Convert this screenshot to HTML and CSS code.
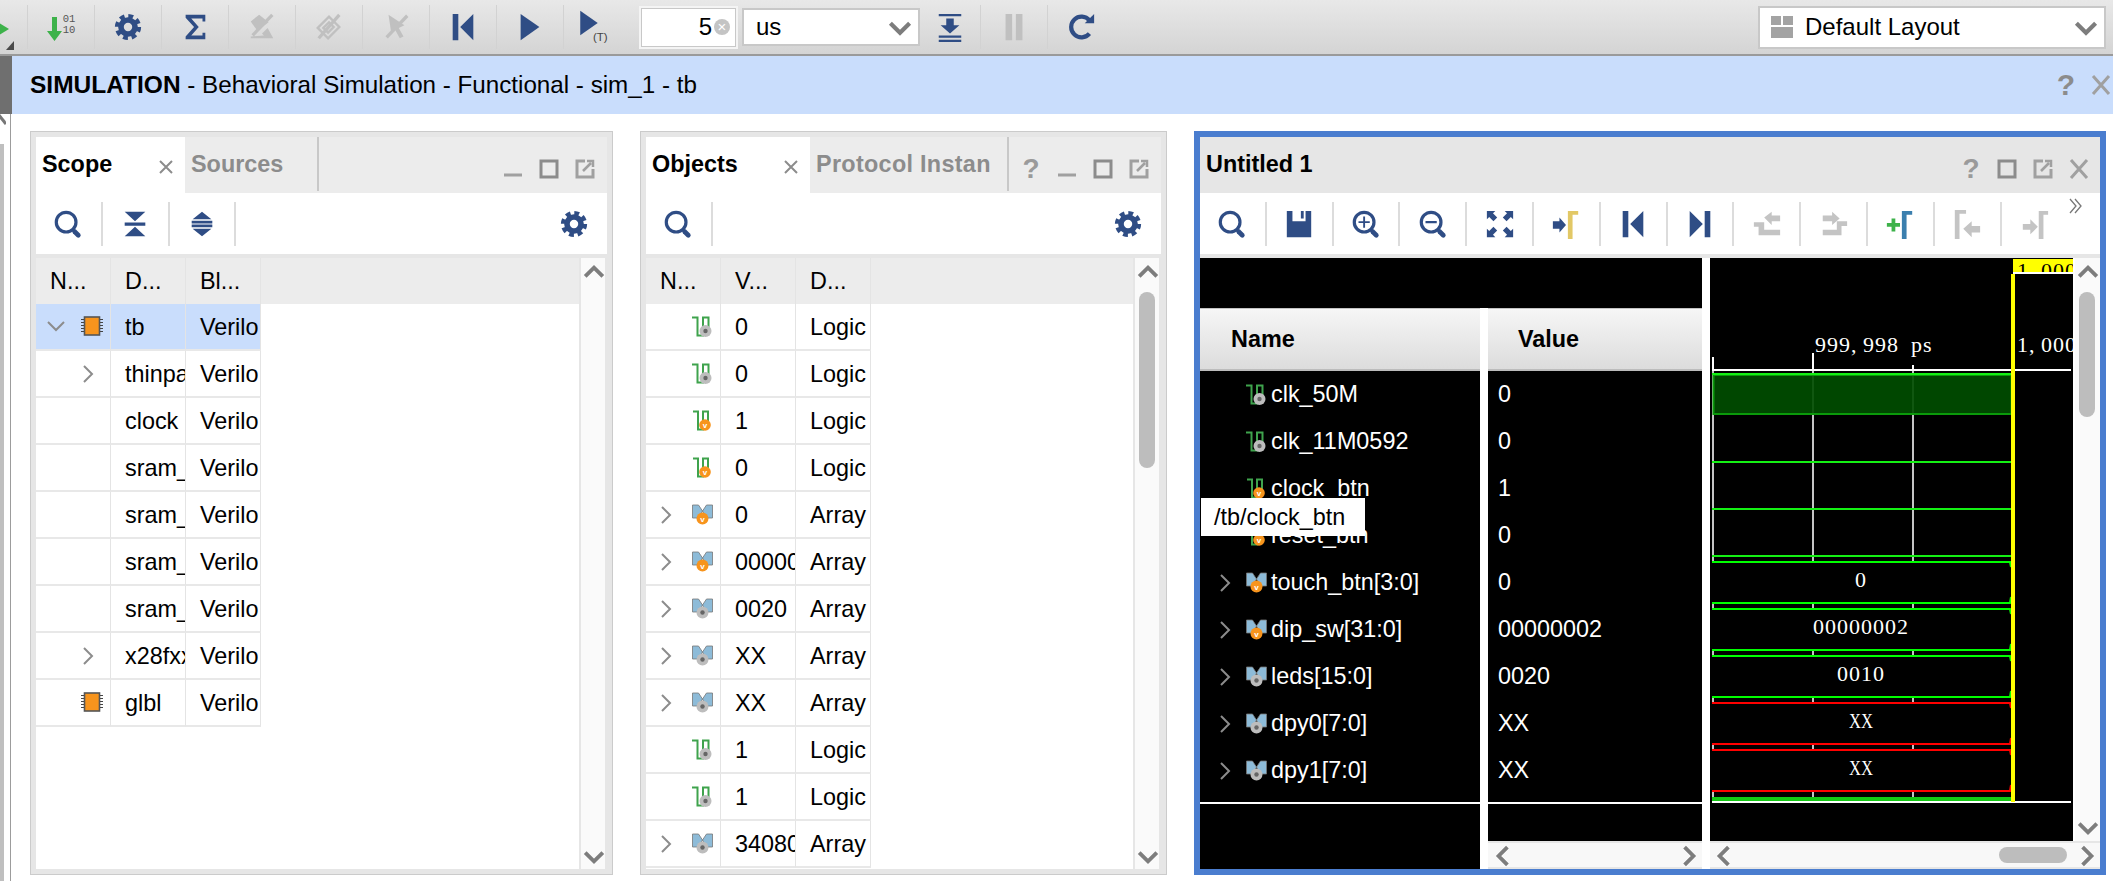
FILE: index.html
```html
<!DOCTYPE html>
<html lang="en">
<head>
  <meta charset="UTF-8" />
  <title>SIMULATION - Behavioral Simulation</title>
  <link rel="stylesheet" href="styles.css">
</head>
<body>

<svg class="defs" width="0" height="0">
  <symbol id="i-search" viewBox="0 0 32 32"><circle cx="14" cy="14" r="10.5" fill="none" stroke="currentColor" stroke-width="3.4"/><path d="M23 24l4 4" stroke="currentColor" stroke-width="5" stroke-linecap="round"/></symbol>
  <symbol id="i-zoomin" viewBox="0 0 32 32"><circle cx="14" cy="14" r="10.5" fill="none" stroke="currentColor" stroke-width="3.4"/><path d="M23 24l4 4" stroke="currentColor" stroke-width="5" stroke-linecap="round"/><path d="M14 8v12M8 14h12" stroke="currentColor" stroke-width="2"/></symbol>
  <symbol id="i-zoomout" viewBox="0 0 32 32"><circle cx="14" cy="14" r="10.5" fill="none" stroke="currentColor" stroke-width="3.4"/><path d="M23 24l4 4" stroke="currentColor" stroke-width="5" stroke-linecap="round"/><path d="M8 14h12" stroke="currentColor" stroke-width="2.4"/></symbol>
  <symbol id="i-gear" viewBox="0 0 32 32"><circle cx="16" cy="16" r="7.5" fill="none" stroke="currentColor" stroke-width="6"/><circle cx="16" cy="16" r="11.5" fill="none" stroke="currentColor" stroke-width="5" stroke-dasharray="5.03 4"/></symbol>
  <symbol id="i-collapse" viewBox="0 0 32 32"><path d="M5 3h22L16 13zM5 29h22L16 19zM5 14.5h22v3.4H5z" fill="currentColor"/></symbol>
  <symbol id="i-expand" viewBox="0 0 32 32"><path d="M6 11L16 3l10 8zM6 21l10 8 10-8zM5 12.500h22v3H5zM5 16.500h22v3H5z" fill="currentColor"/></symbol>
  <symbol id="i-first" viewBox="0 0 32 32"><path d="M5 2h6v28H5zM27 2v28L13 16z" fill="currentColor"/></symbol>
  <symbol id="i-last" viewBox="0 0 32 32"><path d="M27 2h-6v28h6zM5 2v28l14-14z" fill="currentColor"/></symbol>
  <symbol id="i-play" viewBox="0 0 32 32"><path d="M6 2v28l20-14z" fill="currentColor"/></symbol>
  <symbol id="i-sigma" viewBox="0 0 32 32"><path d="M6 3h21v7h-3V7H12l8 9-8 9h12v-3h3v7H6v-3l9-10-9-10z" fill="currentColor"/></symbol>
  <symbol id="i-floppy" viewBox="0 0 32 32"><path d="M3 2h6v11h14V2h6v28H3zM18 2h3v8h-3z" fill="currentColor"/></symbol>
  <symbol id="i-fit" viewBox="0 0 32 32"><path d="M2 2h9L8.500 4.500 13 9l-4 4-4.500-4.500L2 11zM30 2v9l-2.500-2.500L23 13l-4-4 4.500-4.500L21 2zM2 30v-9l2.500 2.500L9 19l4 4-4.500 4.500L11 30zM30 30h-9l2.500-2.500L19 23l4-4 4.500 4.500L30 21z" fill="currentColor"/></symbol>
  <symbol id="i-cursor" viewBox="0 0 32 32"><path d="M2 13h7V9l7 8-7 8v-4H2z" fill="#2f4d85"/><path d="M18 2h11v4h-6v26h-5z" fill="#e2c866"/></symbol>
  <symbol id="i-edge-back" viewBox="0 0 32 32"><path d="M2 14h11v8h17v6H7v-9H2zM13 9l8-6v4h9v6h-9v4z" fill="currentColor"/></symbol>
  <symbol id="i-edge-fwd" viewBox="0 0 32 32"><path d="M4 7h10V3l8 7-8 7v-4H4zM4 22h15v-9h11v5h-6v10H4z" fill="currentColor"/></symbol>
  <symbol id="i-marker" viewBox="0 0 32 32"><path d="M2 15h5v-5h4v5h5v4h-5v5H7v-5H2z" fill="#3db24a"/><path d="M18 2h11v4h-6v26h-5z" fill="#3b7fae"/></symbol>
  <symbol id="i-mark-back" viewBox="0 0 32 32"><path d="M3 1h12v4H8v27H3zM12 21l9-8v5h9v7h-9v5z" fill="currentColor"/></symbol>
  <symbol id="i-mark-fwd" viewBox="0 0 32 32"><path d="M3 16h8v-5l8 8-8 8v-5H3zM20 2h10v4h-5v26h-5z" fill="currentColor"/></symbol>
  <symbol id="i-clear-a" viewBox="0 0 32 32"><path d="M4 10l9-7 10 8-12 9zM4 28h24l-6-11-6 6 2 2-14 1z" fill="currentColor"/><path d="M27 3L6 25" stroke="currentColor" stroke-width="3.500"/></symbol>
  <symbol id="i-clear-b" viewBox="0 0 32 32"><path d="M4 17L16 5l11 11-12 12zM10 17l6-6 5 5-6 6z" fill="none" stroke="currentColor" stroke-width="2.500"/><path d="M27 3L5 28" stroke="currentColor" stroke-width="3.500"/></symbol>
  <symbol id="i-clear-c" viewBox="0 0 32 32"><path d="M8 3l17 11-6 3 5 9-4 2-5-9-4 4z" fill="currentColor"/><path d="M28 4L6 27" stroke="currentColor" stroke-width="3.500"/></symbol>
  <symbol id="i-bottom" viewBox="0 0 32 32"><path d="M4 2h24v2.500H4zM12 7h8v7h6L16 23 6 14h6zM4 25h24v2.500H4zM4 29.500h24V32H4z" fill="currentColor"/></symbol>
  <symbol id="i-pause" viewBox="0 0 32 32"><path d="M7 2h7v28H7zM18 2h7v28h-7z" fill="currentColor"/></symbol>
  <symbol id="i-refresh" viewBox="0 0 32 32"><path d="M25 23a11 11 0 1 1 0-14" fill="none" stroke="currentColor" stroke-width="4.500"/><path d="M20 12h10V2z" fill="currentColor"/></symbol>
  <symbol id="i-chip" viewBox="0 0 22 20"><path d="M0 3.500h4M0 6.500h4M0 9.500h4M0 12.500h4M0 15.500h4M18 3.500h4M18 6.500h4M18 9.500h4M18 12.500h4M18 15.500h4" stroke="#444" stroke-width="1.200"/><rect x="3.500" y="1" width="15" height="18" fill="#f7941d" stroke="#555" stroke-width="1.600"/></symbol>
  <symbol id="i-sig" viewBox="0 0 21 21"><path d="M0 1.500h5.500v18H11v-18h5.500v17" fill="none" stroke="#3fa34d" stroke-width="2"/><circle cx="13.500" cy="15" r="6" fill="#bdbdbd"/><circle cx="13.500" cy="15" r="2.200" fill="#666"/></symbol>
  <symbol id="i-sigv" viewBox="0 0 21 21"><path d="M1 1.500h5v18h5v-18h5v17" fill="none" stroke="#3fa34d" stroke-width="2"/><circle cx="13" cy="15" r="5.800" fill="#f7941d"/><text x="13" y="18" class="badge-v">v</text></symbol>
  <symbol id="i-bus" viewBox="0 0 21 21"><path d="M.5 1h6l4 6 4-6h6v13h-6l-4-7-4 7h-6z" fill="#8dbbd8" stroke="#777" stroke-width=".8"/><circle cx="10.500" cy="14.500" r="6" fill="#bdbdbd"/><circle cx="10.500" cy="14.500" r="2.200" fill="#666"/></symbol>
  <symbol id="i-busv" viewBox="0 0 21 21"><path d="M.5 1h6l4 6 4-6h6v13h-6l-4-7-4 7h-6z" fill="#8dbbd8" stroke="#777" stroke-width=".8"/><circle cx="10.500" cy="14.500" r="6" fill="#f7941d"/><text x="10.500" y="18" class="badge-v">v</text></symbol>
  <symbol id="i-right" viewBox="0 0 12 20"><path d="M2 2l8 8-8 8" fill="none" stroke="#8c8c8c" stroke-width="2"/></symbol>
  <symbol id="i-down" viewBox="0 0 20 12"><path d="M2 2l8 8 8-8" fill="none" stroke="#8c8c8c" stroke-width="2"/></symbol>
  <symbol id="i-scroll" viewBox="0 0 20 20"><path d="M2 14l8-8 8 8" fill="none" stroke="#7d7d7d" stroke-width="3.500"/></symbol>
  <symbol id="i-close" viewBox="0 0 14 14"><path d="M1 1l12 12M13 1L1 13" stroke="#8c8c8c" stroke-width="2"/></symbol>
  <symbol id="i-close-big" viewBox="0 0 20 20"><path d="M2 1l16 18M18 1L2 19" stroke="#a0a0a0" stroke-width="3"/></symbol>
  <symbol id="i-min" viewBox="0 0 20 20"><path d="M1 16h18" stroke="#a0a0a0" stroke-width="3"/></symbol>
  <symbol id="i-box" viewBox="0 0 20 20"><rect x="2" y="2" width="16" height="16" fill="none" stroke="#8c8c8c" stroke-width="3"/></symbol>
  <symbol id="i-pop" viewBox="0 0 20 20"><path d="M10 2H2v16h16v-8" fill="none" stroke="#a0a0a0" stroke-width="3"/><path d="M8 12l8-8M12 2h6v6" fill="none" stroke="#a0a0a0" stroke-width="2.500"/></symbol>
  <symbol id="i-tile" viewBox="0 0 22 22"><path d="M0 0h10v9H0zM12 0h10v9H12zM0 11h22v11H0z" fill="#a3a3a3"/></symbol>
</svg>

<div class="toolbar">
  <div class="tb-stub">
    <svg width="27" height="54"><path d="M-6 20l15 9-15 9z" fill="#3db24a"/><path d="M14 41v9H6z" fill="#4a4a4a"/></svg>
  </div>
  <div class="tb-btn"><svg class="ic-dl" width="16" height="26"><path d="M5 1h5v14h5l-7.500 10L0 15h5z" fill="#3db24a"/></svg><span class="bits">01<br>10</span></div>
  <div class="tb-btn navy"><svg class="ic-30"><use href="#i-gear"/></svg></div>
  <div class="tb-btn navy"><svg class="ic-30"><use href="#i-sigma"/></svg></div>
  <div class="tb-btn off"><svg class="ic-30"><use href="#i-clear-a"/></svg></div>
  <div class="tb-btn off"><svg class="ic-30"><use href="#i-clear-b"/></svg></div>
  <div class="tb-btn off"><svg class="ic-30"><use href="#i-clear-c"/></svg></div>
  <div class="tb-btn navy"><svg class="ic-30"><use href="#i-first"/></svg></div>
  <div class="tb-btn navy"><svg class="ic-30"><use href="#i-play"/></svg></div>
  <div class="tb-btn navy"><svg class="ic-play-t"><use href="#i-play"/></svg><span class="t-mark">(T)</span></div>

  <div class="time-box"><span>5</span><i class="clear-dot">×</i></div>
  <div class="combo unit"><span>us</span><svg class="combo-arrow"><use href="#i-scroll" transform="rotate(180 12 12)"/></svg></div>
  <div class="tb-btn navy first-after"><svg class="ic-30"><use href="#i-bottom"/></svg></div>
  <div class="tb-btn off"><svg class="ic-30"><use href="#i-pause"/></svg></div>
  <div class="tb-btn navy"><svg class="ic-30"><use href="#i-refresh"/></svg></div>

  <div class="combo layout"><svg class="tile"><use href="#i-tile"/></svg><span>Default Layout</span><svg class="combo-arrow"><use href="#i-scroll" transform="rotate(180 12 12)"/></svg></div>
</div>

<div class="banner">
  <div><b>SIMULATION</b> - Behavioral Simulation - Functional - sim_1 - tb</div>
  <div class="banner-btns"><span>?</span><svg width="20" height="24"><use href="#i-close-big"/></svg></div>
</div>

<div class="main">
  <div class="edge">
    <svg width="6" height="30"><path d="M-2 0l8 10" stroke="#777" stroke-width="3"/></svg>
    <div class="edge-bar"></div>
  </div>

  <!-- scope -->
  <div class="panel scope">
    <div class="title-strip">
      <div class="tab active scope-tab"><span>Scope</span><svg width="14" height="14"><use href="#i-close"/></svg></div>
      <div class="tab sources-tab">Sources</div>
      <div class="win-btns">
        <div class="win-btn"><svg><use href="#i-min"/></svg></div>
        <div class="win-btn"><svg><use href="#i-box"/></svg></div>
        <div class="win-btn"><svg><use href="#i-pop"/></svg></div>
      </div>
    </div>
    <div class="tools">
      <div class="tool"><svg class="ic-28"><use href="#i-search"/></svg></div>
      <div class="tool"><svg class="ic-28"><use href="#i-collapse"/></svg></div>
      <div class="tool"><svg class="ic-28"><use href="#i-expand"/></svg></div>
      <div class="tool last"><svg class="ic-28"><use href="#i-gear"/></svg></div>
    </div>
    <div class="list">
      <div class="table">
        <div class="row head"><div class="cell">N...</div><div class="cell">D...</div><div class="cell">Bl...</div></div>
        <div class="row sel"><div class="cell tree"><svg class="tw-down"><use href="#i-down"/></svg><svg class="chip"><use href="#i-chip"/></svg></div><div class="cell">tb</div><div class="cell">Verilo</div></div>
        <div class="row"><div class="cell tree"><svg class="tw-right"><use href="#i-right"/></svg></div><div class="cell">thinpa</div><div class="cell">Verilo</div></div>
        <div class="row"><div class="cell tree"></div><div class="cell">clock</div><div class="cell">Verilo</div></div>
        <div class="row"><div class="cell tree"></div><div class="cell">sram_</div><div class="cell">Verilo</div></div>
        <div class="row"><div class="cell tree"></div><div class="cell">sram_</div><div class="cell">Verilo</div></div>
        <div class="row"><div class="cell tree"></div><div class="cell">sram_</div><div class="cell">Verilo</div></div>
        <div class="row"><div class="cell tree"></div><div class="cell">sram_</div><div class="cell">Verilo</div></div>
        <div class="row"><div class="cell tree"><svg class="tw-right"><use href="#i-right"/></svg></div><div class="cell">x28fxx</div><div class="cell">Verilo</div></div>
        <div class="row"><div class="cell tree"><svg class="chip"><use href="#i-chip"/></svg></div><div class="cell">glbl</div><div class="cell">Verilo</div></div>
      </div>
      <div class="vscroll"><svg class="sc-up"><use href="#i-scroll"/></svg><svg class="sc-down"><use href="#i-scroll" transform="rotate(180 11 11)"/></svg></div>
    </div>
  </div>

  <!-- objects -->
  <div class="panel objects">
    <div class="title-strip">
      <div class="tab active objects-tab"><span>Objects</span><svg width="14" height="14"><use href="#i-close"/></svg></div>
      <div class="tab protocol-tab">Protocol Instan</div>
      <div class="win-btns">
        <div class="win-btn help">?</div>
        <div class="win-btn"><svg><use href="#i-min"/></svg></div>
        <div class="win-btn"><svg><use href="#i-box"/></svg></div>
        <div class="win-btn"><svg><use href="#i-pop"/></svg></div>
      </div>
    </div>
    <div class="tools">
      <div class="tool"><svg class="ic-28"><use href="#i-search"/></svg></div>
      <div class="tool last"><svg class="ic-28"><use href="#i-gear"/></svg></div>
    </div>
    <div class="list">
      <div class="table">
        <div class="row head"><div class="cell">N...</div><div class="cell">V...</div><div class="cell">D...</div></div>
        <div class="row"><div class="cell tree"><svg class="sig"><use href="#i-sig"/></svg></div><div class="cell">0</div><div class="cell">Logic</div></div>
        <div class="row"><div class="cell tree"><svg class="sig"><use href="#i-sig"/></svg></div><div class="cell">0</div><div class="cell">Logic</div></div>
        <div class="row"><div class="cell tree"><svg class="sig"><use href="#i-sigv"/></svg></div><div class="cell">1</div><div class="cell">Logic</div></div>
        <div class="row"><div class="cell tree"><svg class="sig"><use href="#i-sigv"/></svg></div><div class="cell">0</div><div class="cell">Logic</div></div>
        <div class="row"><div class="cell tree"><svg class="tw-right"><use href="#i-right"/></svg><svg class="sig"><use href="#i-busv"/></svg></div><div class="cell">0</div><div class="cell">Array</div></div>
        <div class="row"><div class="cell tree"><svg class="tw-right"><use href="#i-right"/></svg><svg class="sig"><use href="#i-busv"/></svg></div><div class="cell">00000</div><div class="cell">Array</div></div>
        <div class="row"><div class="cell tree"><svg class="tw-right"><use href="#i-right"/></svg><svg class="sig"><use href="#i-bus"/></svg></div><div class="cell">0020</div><div class="cell">Array</div></div>
        <div class="row"><div class="cell tree"><svg class="tw-right"><use href="#i-right"/></svg><svg class="sig"><use href="#i-bus"/></svg></div><div class="cell">XX</div><div class="cell">Array</div></div>
        <div class="row"><div class="cell tree"><svg class="tw-right"><use href="#i-right"/></svg><svg class="sig"><use href="#i-bus"/></svg></div><div class="cell">XX</div><div class="cell">Array</div></div>
        <div class="row"><div class="cell tree"><svg class="sig"><use href="#i-sig"/></svg></div><div class="cell">1</div><div class="cell">Logic</div></div>
        <div class="row"><div class="cell tree"><svg class="sig"><use href="#i-sig"/></svg></div><div class="cell">1</div><div class="cell">Logic</div></div>
        <div class="row"><div class="cell tree"><svg class="tw-right"><use href="#i-right"/></svg><svg class="sig"><use href="#i-bus"/></svg></div><div class="cell">34080</div><div class="cell">Array</div></div>
      </div>
      <div class="vscroll"><svg class="sc-up"><use href="#i-scroll"/></svg><div class="thumb obj-thumb"></div><svg class="sc-down"><use href="#i-scroll" transform="rotate(180 11 11)"/></svg></div>
    </div>
  </div>

  <!-- waveform -->
  <div class="panel wave">
    <div class="title-strip">
      <div class="wave-title">Untitled 1</div>
      <div class="win-btns">
        <div class="win-btn help">?</div>
        <div class="win-btn"><svg><use href="#i-box"/></svg></div>
        <div class="win-btn"><svg><use href="#i-pop"/></svg></div>
        <div class="win-btn"><svg><use href="#i-close-big"/></svg></div>
      </div>
    </div>
    <div class="tools">
      <div class="tool"><svg class="ic-28"><use href="#i-search"/></svg></div>
      <div class="tool"><svg class="ic-28"><use href="#i-floppy"/></svg></div>
      <div class="tool"><svg class="ic-28"><use href="#i-zoomin"/></svg></div>
      <div class="tool"><svg class="ic-28"><use href="#i-zoomout"/></svg></div>
      <div class="tool"><svg class="ic-28"><use href="#i-fit"/></svg></div>
      <div class="tool"><svg class="ic-28"><use href="#i-cursor"/></svg></div>
      <div class="tool"><svg class="ic-28"><use href="#i-first"/></svg></div>
      <div class="tool"><svg class="ic-28"><use href="#i-last"/></svg></div>
      <div class="tool off"><svg class="ic-28"><use href="#i-edge-back"/></svg></div>
      <div class="tool off"><svg class="ic-28"><use href="#i-edge-fwd"/></svg></div>
      <div class="tool"><svg class="ic-28"><use href="#i-marker"/></svg></div>
      <div class="tool off"><svg class="ic-28"><use href="#i-mark-back"/></svg></div>
      <div class="tool off plain"><svg class="ic-28"><use href="#i-mark-fwd"/></svg></div>
      <svg class="more" width="14" height="16"><path d="M1 1l6 7-6 7M6 1l6 7-6 7" fill="none" stroke="#777" stroke-width="1.300"/></svg>
    </div>
    <div class="wave-body">
      <div class="names">
        <div class="wave-top"></div>
        <div class="wave-head name-head">Name</div>
        <div class="sigs">
          <div class="sig-row"><div class="twist"></div><svg class="sig"><use href="#i-sig"/></svg><span>clk_50M</span></div>
          <div class="sig-row"><div class="twist"></div><svg class="sig"><use href="#i-sig"/></svg><span>clk_11M0592</span></div>
          <div class="sig-row"><div class="twist"></div><svg class="sig"><use href="#i-sigv"/></svg><span>clock_btn</span></div>
          <div class="sig-row"><div class="twist"></div><svg class="sig"><use href="#i-sigv"/></svg><span>reset_btn</span></div>
          <div class="sig-row"><div class="twist"><svg class="tw-right"><use href="#i-right"/></svg></div><svg class="sig"><use href="#i-busv"/></svg><span>touch_btn[3:0]</span></div>
          <div class="sig-row"><div class="twist"><svg class="tw-right"><use href="#i-right"/></svg></div><svg class="sig"><use href="#i-busv"/></svg><span>dip_sw[31:0]</span></div>
          <div class="sig-row"><div class="twist"><svg class="tw-right"><use href="#i-right"/></svg></div><svg class="sig"><use href="#i-bus"/></svg><span>leds[15:0]</span></div>
          <div class="sig-row"><div class="twist"><svg class="tw-right"><use href="#i-right"/></svg></div><svg class="sig"><use href="#i-bus"/></svg><span>dpy0[7:0]</span></div>
          <div class="sig-row"><div class="twist"><svg class="tw-right"><use href="#i-right"/></svg></div><svg class="sig"><use href="#i-bus"/></svg><span>dpy1[7:0]</span></div>
        </div>
        <div class="end-line"></div>
        <div class="tooltip">/tb/clock_btn</div>
      </div>
      <div class="values">
        <div class="wave-top"></div>
        <div class="wave-head value-head">Value</div>
        <div class="sigs">
          <div class="val-row">0</div>
          <div class="val-row">0</div>
          <div class="val-row">1</div>
          <div class="val-row">0</div>
          <div class="val-row">0</div>
          <div class="val-row">00000002</div>
          <div class="val-row">0020</div>
          <div class="val-row">XX</div>
          <div class="val-row">XX</div>
        </div>
        <div class="end-line"></div>
        <div class="spacer"></div>
        <div class="hscroll"><svg class="hs-left"><use href="#i-scroll" transform="rotate(-90 11 11)"/></svg><svg class="hs-right"><use href="#i-scroll" transform="rotate(90 11 11)"/></svg></div>
      </div>
      <div class="plot">
        <svg class="plot-svg" width="363" height="583" viewBox="0 0 363 583">
          <defs><clipPath id="label-clip"><rect x="303" y="1" width="60" height="13"/></clipPath></defs>
          <path d="M3 112V304M103 112V304M203 112V304" stroke="#c4c4c4" stroke-width="2"/>
          <path d="M3 99v13M103 95v17M203 107v5" stroke="#fff" stroke-width="2"/>
          <path d="M3 345v6M103 345v6M203 345v6M3 392v6M103 392v6M203 392v6M3 439v6M103 439v6M203 439v6M3 486v6M103 486v6M203 486v6M3 533v7M103 533v7M203 533v7" stroke="#c4c4c4" stroke-width="2"/>
          <text class="ruler" x="105 117 129 141 153 165 177 189 201 213" y="94">999,998 ps</text>
          <text class="ruler" x="307 319 331 343 355" y="94">1,000</text>
          <path d="M2 112H361" stroke="#fff" stroke-width="2"/>
          <rect x="3.500" y="117" width="298" height="39" fill="#004d00" fill-opacity=".92" stroke="#0a9a0a" stroke-width="2"/>
          <path d="M2 116H301M2 204H301M2 251H301M2 298H301" stroke="#14f014" stroke-width="2"/>
          <path d="M2 304H300L301 309M2 345H300L301 339M2 351H300L301 356M2 392H300L301 386M2 398H300L301 403M2 439H300L301 433" fill="none" stroke="#00ff00" stroke-width="2"/>
          <path d="M2 445H300L301 450M2 486H300L301 480M2 492H300L301 497M2 533H300L301 527" fill="none" stroke="#ff0000" stroke-width="2"/>
          <path d="M2 541H302" stroke="#14c814" stroke-width="4"/>
          <path d="M2 544H361" stroke="#fff" stroke-width="2"/>
          <text class="ruler mid" x="151" y="329">0</text>
          <text class="ruler mid" x="151" y="376">00000002</text>
          <text class="ruler mid" x="151" y="423">0010</text>
          <text class="ruler" x="139" y="470" textLength="24" lengthAdjust="spacingAndGlyphs">XX</text>
          <text class="ruler" x="139" y="517" textLength="24" lengthAdjust="spacingAndGlyphs">XX</text>
          <path d="M303 16V544" stroke="#ffff00" stroke-width="4"/>
          <rect x="303" y="1" width="60" height="13" fill="#ffff00"/>
          <text class="ruler dark" x="307 319 331 343 355" y="20" clip-path="url(#label-clip)">1,000</text>
          <path d="M303 15H363" stroke="#fff" stroke-width="2"/>
        </svg>
        <div class="hscroll plot-scroll"><svg class="hs-left"><use href="#i-scroll" transform="rotate(-90 11 11)"/></svg><div class="thumb h-thumb"></div></div>
      </div>
      <div class="vscroll wave-scroll">
        <svg class="sc-up"><use href="#i-scroll"/></svg>
        <div class="thumb wave-thumb"></div>
        <svg class="sc-down"><use href="#i-scroll" transform="rotate(180 11 11)"/></svg>
        <div class="corner"><svg class="hs-right"><use href="#i-scroll" transform="rotate(90 11 11)"/></svg></div>
      </div>
    </div>
  </div>
</div>

</body>
</html>
```
FILE: styles.css
```css
* {
  box-sizing: border-box;
}
html, body {
  margin: 0;
  height: 881px;
  overflow: hidden;
}
body {
  display: flex;
  flex-direction: column;
  background: #fff;
  font-family: "Liberation Sans", Arial, sans-serif;
  font-size: 23.4px;
  color: #000;
}
.defs {
  position: absolute;
}
.badge-v {
  font-size: 8px;
  font-weight: bold;
  fill: #fff;
  text-anchor: middle;
}

/* top toolbar */
.toolbar {
  flex: 0 0 56px;
  display: flex;
  align-items: center;
  background: linear-gradient(#e8e8e8, #d4d4d4);
  border-bottom: 2px solid #9a9a9a;
}
.tb-stub {
  width: 27px;
  height: 54px;
  overflow: hidden;
}
.tb-stub svg {
  display: block;
}
.tb-btn {
  position: relative;
  width: 67px;
  height: 44px;
  display: flex;
  align-items: center;
  justify-content: center;
  border-left: 1px solid #d2d2d2;
}
.navy {
  color: #2f4d85;
}
.off {
  color: #c0c0c0;
}
.ic-30 {
  width: 30px;
  height: 30px;
}
.ic-dl {
  margin-top: 3px;
}
.bits {
  font-family: "Liberation Mono", monospace;
  font-size: 10.500px;
  line-height: 11px;
  color: #555;
  margin: -5px 0 0 0;
}
.ic-play-t {
  width: 28px;
  height: 28px;
  margin: -8px 0 0 -16px;
}
.t-mark {
  position: absolute;
  left: 29px;
  top: 26px;
  font-size: 11.500px;
  color: #444;
}
.time-box {
  width: 99px;
  height: 43px;
  margin-left: 9px;
  padding-right: 6px;
  display: flex;
  align-items: center;
  justify-content: flex-end;
  background: #fff;
  border: 2px solid #f4f4f4;
  box-shadow: inset 0 0 0 1px #c8c8c8;
  font-size: 24px;
}
.clear-dot {
  width: 16px;
  height: 16px;
  margin-left: 2px;
  border-radius: 50%;
  background: #c4c4c4;
  color: #fff;
  font-size: 15px;
  font-style: normal;
  line-height: 16px;
  text-align: center;
}
.combo {
  height: 38px;
  display: flex;
  align-items: center;
  background: #fff;
  border: 2px solid #c8c8c8;
  font-size: 24px;
}
.unit {
  width: 178px;
  margin-left: 4px;
  padding-left: 12px;
}
.unit span {
  flex: 1;
}
.combo-arrow {
  width: 24px;
  height: 24px;
  margin: 2px 6px 0 0;
}
.first-after {
  width: 60px;
  border-left: 0;
}
.layout {
  width: 348px;
  height: 43px;
  margin: 0 7px 0 auto;
  padding-left: 11px;
}
.layout span {
  flex: 1;
}
.tile {
  width: 22px;
  height: 22px;
  margin-right: 12px;
}

/* blue state bar */
.banner {
  flex: 0 0 58px;
  display: flex;
  align-items: center;
  justify-content: space-between;
  padding-left: 18px;
  background: #c9ddfc;
  border-left: 12px solid #6f6f6f;
  font-size: 24.200px;
}
.banner b {
  font-size: 24.500px;
}
.banner-btns {
  display: flex;
  align-items: center;
  gap: 16px;
  padding-right: 2px;
  color: #8c8c8c;
  font-weight: bold;
  font-size: 30px;
}

/* panels */
.main {
  flex: 1;
  min-height: 0;
  display: flex;
  padding-bottom: 6px;
}
.edge {
  width: 11px;
  display: flex;
  flex-direction: column;
  margin: 0 19px -6px 0;
  border-right: 1px solid #9c9c9c;
}
.edge-bar {
  flex: 1;
  width: 4px;
  background: #bfbfbf;
}
.panel {
  margin-top: 17px;
  padding: 5px;
  display: flex;
  flex-direction: column;
  background: #e6e6e6;
  border: 1px solid #cbcbcb;
}
.scope {
  width: 583px;
}
.objects {
  width: 527px;
  margin-left: 27px;
}
.wave {
  width: 912px;
  margin-left: 27px;
  padding: 0;
  border: 6px solid #4a7dcf;
}
.title-strip {
  flex: 0 0 56px;
  display: flex;
  background: #ececec;
}
.wave .title-strip {
  background: #e6e6e6;
}
.tab {
  display: flex;
  justify-content: space-between;
  padding: 13px 12px 0 6px;
  font-weight: bold;
  line-height: 28px;
  color: #8c8c8c;
  white-space: nowrap;
}
.tab svg {
  margin-top: 10px;
}
.tab.active {
  background: #fff;
  color: #000;
}
.scope-tab {
  width: 149px;
}
.sources-tab {
  width: 134px;
  height: 54px;
  border-right: 2px solid #c8c8c8;
}
.objects-tab {
  width: 164px;
}
.protocol-tab {
  width: 199px;
  height: 54px;
  overflow: hidden;
  letter-spacing: .3px;
  border-right: 2px solid #c8c8c8;
}
.win-btns {
  margin-left: auto;
  display: flex;
  padding: 21px 4px 0 0;
}
.wave .win-btns {
  padding-right: 3px;
}
.win-btn {
  width: 36px;
  height: 22px;
  text-align: center;
}
.win-btn svg {
  width: 20px;
  height: 20px;
}
.win-btn.help {
  font-size: 28px;
  font-weight: bold;
  line-height: 22px;
  color: #9a9a9a;
}
.wave-title {
  padding: 13px 0 0 6px;
  font-weight: bold;
  line-height: 28px;
}

.tools {
  flex: 0 0 61px;
  display: flex;
  align-items: center;
  background: #fff;
  color: #2f4d85;
  position: relative;
}
.tool {
  width: 66.800px;
  height: 44px;
  display: flex;
  align-items: center;
  justify-content: center;
  border-right: 2px solid #dcdcdc;
}
.tool.off {
  color: #c4c4c4;
}
.tool.plain, .tool.last {
  border-right: 0;
}
.tool.last {
  margin-left: auto;
}
.ic-28 {
  width: 30px;
  height: 30px;
}
.more {
  position: absolute;
  right: 17px;
  top: 5px;
}

/* tables */
.list {
  flex: 1;
  min-height: 0;
  margin-top: 4px;
  display: flex;
}
.table {
  flex: 1;
  overflow: hidden;
  background: #fff;
}
.row {
  display: flex;
  width: max-content;
  height: 47px;
  line-height: 46px;
}
.row .cell {
  width: 75px;
  padding-left: 14px;
  overflow: hidden;
  white-space: nowrap;
  border-right: 1px solid #e4e4e4;
  border-bottom: 2px solid #e8e8e8;
  position: relative;
}
.row.head {
  width: 100%;
  height: 46px;
  background: #ececec;
}
.row.head .cell {
  padding-left: 14px;
  border-bottom: 0;
}
.row.sel {
  background: #c9ddfc;
}
.row .cell.tree {
  padding: 0;
}
.tree svg {
  position: absolute;
  top: 50%;
}
.tw-down {
  left: 10px;
  width: 20px;
  height: 12px;
  margin-top: -7px;
}
.tw-right {
  width: 12px;
  height: 20px;
  margin-top: -10px;
}
.tree .tw-right {
  left: 46px;
}
.chip {
  left: 45px;
  width: 22px;
  height: 20px;
  margin-top: -11px;
}
.sig {
  flex: none;
  width: 21px;
  height: 21px;
}
.tree .sig {
  left: 46px;
  margin-top: -11px;
}
.objects .tree .tw-right {
  left: 14px;
}

.vscroll {
  position: relative;
  flex: 0 0 26px;
  margin-right: 2px;
  background: #fafafa;
  border-left: 2px solid #e6e6e6;
}
.sc-up, .sc-down {
  position: absolute;
  left: 2px;
  width: 22px;
  height: 22px;
}
.sc-up {
  top: 3px;
}
.sc-down {
  bottom: 1px;
}
.thumb {
  position: absolute;
  background: #bdbdbd;
  border-radius: 8px;
}
.obj-thumb {
  left: 4px;
  top: 34px;
  width: 16px;
  height: 176px;
}

/* wave window */
.wave-body {
  flex: 1;
  min-height: 0;
  margin-top: 4px;
  display: flex;
  background: #fff;
}
.names, .values, .plot {
  display: flex;
  flex-direction: column;
  position: relative;
  color: #fff;
  background: #000;
}
.names {
  width: 280px;
}
.values {
  width: 214px;
  margin-left: 8px;
}
.plot {
  width: 363px;
  margin-left: 8px;
}
.wave-top {
  flex: 0 0 50px;
}
.values .wave-top {
  margin-left: -8px;
  background: #000;
}
.wave-head {
  flex: 0 0 62px;
  background: linear-gradient(#f6f6f6, #dcdcdc);
  border-top: 1px solid #c4c4c4;
  border-bottom: 2px solid #bcbcbc;
  color: #000;
  font-weight: bold;
  line-height: 60px;
}
.name-head {
  padding-left: 31px;
}
.value-head {
  padding-left: 30px;
}
.sig-row {
  height: 47px;
  display: flex;
  align-items: center;
}
.twist {
  flex: 0 0 46px;
  padding-left: 19px;
  height: 20px;
}
.twist svg {
  display: block;
  margin: 0;
}
.sig-row span {
  margin-left: 4px;
}
.val-row {
  height: 47px;
  padding-left: 10px;
  line-height: 47px;
}
.end-line {
  height: 2px;
  margin-top: 8px;
  background: #fff;
}
.spacer {
  flex: 1;
}
.tooltip {
  position: absolute;
  left: 1px;
  top: 240px;
  width: 164px;
  height: 38px;
  padding-left: 13px;
  background: #fff;
  color: #000;
  line-height: 38px;
}
.hscroll {
  flex: 0 0 28px;
  position: relative;
  background: #f8f8f8;
  border-top: 2px solid #e6e6e6;
  border-bottom: 2px solid #e6e6e6;
}
.hs-left, .hs-right {
  position: absolute;
  top: 2px;
  width: 22px;
  height: 22px;
}
.hs-left {
  left: 4px;
}
.hs-right {
  right: 2px;
}
.plot-svg {
  flex: none;
  display: block;
  height: 583px;
}
.plot-scroll .hs-left {
  left: 3px;
}
.h-thumb {
  left: 289px;
  top: 4px;
  width: 68px;
  height: 16px;
}
.ruler {
  font-family: "Liberation Serif", serif;
  font-size: 22px;
  fill: #fff;
}
.ruler.mid {
  text-anchor: middle;
  letter-spacing: 1px;
}
.ruler.dark {
  fill: #000;
}
.wave-scroll {
  flex: 0 0 27px;
  margin: 0;
  border-left: 2px solid #fff;
}
.wave-thumb {
  left: 4px;
  top: 34px;
  width: 16px;
  height: 125px;
}
.wave-scroll .sc-down {
  bottom: 30px;
}
.corner {
  position: absolute;
  left: -2px;
  right: 0;
  bottom: 0;
  height: 28px;
  background: #f8f8f8;
  border-top: 2px solid #e6e6e6;
  border-bottom: 2px solid #e6e6e6;
}
```
